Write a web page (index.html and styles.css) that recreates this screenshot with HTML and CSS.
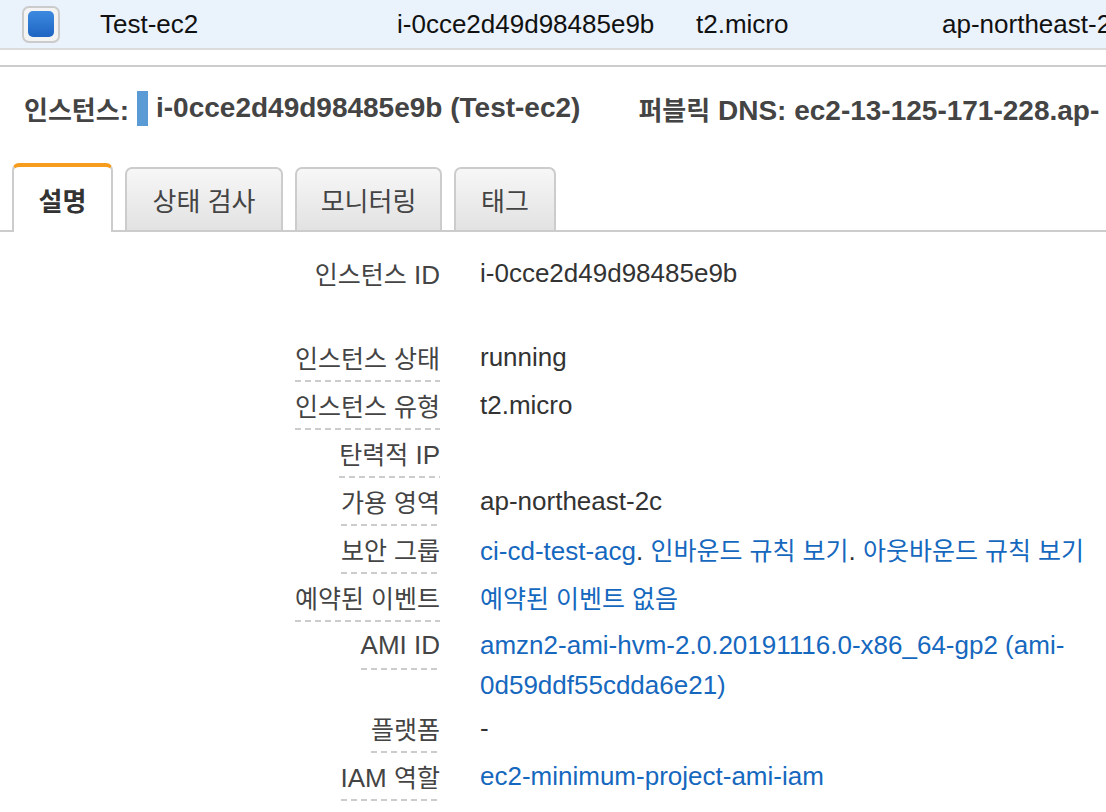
FILE: index.html
```html
<!DOCTYPE html>
<html lang="ko">
<head>
    <meta charset="UTF-8">
    <meta name="viewport" content="width=device-width, initial-scale=1.0">
    <title>EC2 인스턴스 - 설명</title>
    <link rel="stylesheet" href="styles.css">
</head>
<body>
    <!-- 선택된 인스턴스 행 -->
    <div class="instance-row">
        <div class="cell cell-check"><span class="checkbox"><span class="checkbox-mark"></span></span></div>
        <div class="cell cell-name">Test-ec2</div>
        <div class="cell cell-id">i-0cce2d49d98485e9b</div>
        <div class="cell cell-type">t2.micro</div>
        <div class="cell cell-zone">ap-northeast-2c</div>
    </div>

    <div class="detail-pane">
        <div class="detail-header">
            <span class="head-item"><span class="ko">인스턴스</span>:</span>
            <span class="id-bar"></span>
            <span class="head-item">i-0cce2d49d98485e9b (Test-ec2)</span>
            <span class="head-item head-dns"><span class="ko">퍼블릭</span> DNS: ec2-13-125-171-228.ap-</span>
        </div>

        <div class="tabs">
            <div class="tab tab-active" style="width: 101px"><span class="ko">설명</span></div>
            <div class="tab" style="width: 158px"><span class="ko">상태 검사</span></div>
            <div class="tab" style="width: 147px"><span class="ko">모니터링</span></div>
            <div class="tab" style="width: 102px"><span class="ko">태그</span></div>
        </div>

        <div class="details" id="details"></div>
    </div>

    <script>
        // 설명 탭에 표시할 항목
        const rows = [
            { key: '<span class="ko">인스턴스</span> ID', value: 'i-0cce2d49d98485e9b', plain: true },
            { key: '<span class="ko">인스턴스 상태</span>', value: 'running' },
            { key: '<span class="ko">인스턴스 유형</span>', value: 't2.micro' },
            { key: '<span class="ko">탄력적</span> IP', value: '' },
            { key: '<span class="ko">가용 영역</span>', value: 'ap-northeast-2c' },
            { key: '<span class="ko">보안 그룹</span>', value: '<a href="#">ci-cd-test-acg</a>. <a href="#" class="ko">인바운드 규칙 보기</a>. <a href="#" class="ko">아웃바운드 규칙 보기</a>' },
            { key: '<span class="ko">예약된 이벤트</span>', value: '<a href="#" class="ko">예약된 이벤트 없음</a>' },
            { key: 'AMI ID', value: '<a href="#">amzn2-ami-hvm-2.0.20191116.0-x86_64-gp2 (ami-<wbr>0d59ddf55cdda6e21)</a>' },
            { key: '<span class="ko">플랫폼</span>', value: '-' },
            { key: 'IAM <span class="ko">역할</span>', value: '<a href="#">ec2-minimum-project-ami-iam</a>' }
        ];

        const details = document.getElementById('details');
        rows.forEach(row => {
            const item = document.createElement('div');
            item.classList.add('detail-row');
            if (row.plain) item.classList.add('detail-row-first');
            item.innerHTML = `
                <div class="detail-key"><span class="key-text">${row.key}</span></div>
                <div class="detail-value">${row.value}</div>
            `;
            details.appendChild(item);
        });
    </script>
</body>
</html>
```

FILE: styles.css
```css
body {
    font-family: "Liberation Sans", "Noto Sans CJK KR", sans-serif;
    font-size: 26px;
    margin: 0;
    padding: 0;
    background-color: white;
    color: #333;
    overflow: hidden;
    width: 1106px;
    height: 812px;
}

.ko {
    font-family: "Noto Sans CJK KR", sans-serif;
    font-size: 25px;
}

a {
    color: #1668be;
    text-decoration: none;
}

.instance-row {
    display: flex;
    align-items: center;
    height: 48px;
    background-color: #eaf2fc;
    border-bottom: 2px solid #dcdcdc;
    color: #111;
    white-space: nowrap;
}

.cell {
    flex: none;
}

.cell-check {
    width: 78px;
    padding-left: 22px;
    display: flex;
}

.cell-name { width: 297px; }
.cell-id { width: 299px; }
.cell-type { width: 246px; }
.cell-zone { flex: 1; overflow: hidden; }

.checkbox {
    display: flex;
    align-items: center;
    justify-content: center;
    width: 34px;
    height: 33px;
    border: 2px solid #cbcbcb;
    border-radius: 7px;
    background-color: #f3f3f3;
}

.checkbox-mark {
    width: 26px;
    height: 26px;
    border-radius: 5px;
    background: linear-gradient(#3d8ae0, #1e64c2);
}

.detail-pane {
    margin-top: 15px;
    border-top: 2px solid #cccccc;
}

.detail-header {
    display: flex;
    align-items: center;
    height: 82px;
    padding-left: 24px;
    font-size: 28px;
    font-weight: bold;
    color: #444;
    white-space: nowrap;
}

.head-item {
    flex: none;
}

.detail-header .ko {
    font-size: 26px;
}

.id-bar {
    flex: none;
    width: 11px;
    height: 35px;
    margin: 0 8px 0 8px;
    background-color: #5b9bd5;
}

.head-dns {
    margin-left: 58px;
}

.tabs {
    display: flex;
    align-items: flex-end;
    gap: 12px;
    padding: 14px 0 0 12px;
    border-bottom: 2px solid #cccccc;
}

.tab {
    display: flex;
    align-items: center;
    justify-content: center;
    box-sizing: border-box;
    height: 63px;
    border: 2px solid #cccccc;
    border-bottom: none;
    border-radius: 7px 7px 0 0;
    background: linear-gradient(#f7f7f7, #e2e2e2);
    color: #444;
}

.tab .ko {
    font-size: 26px;
}

.tab-active {
    height: 69px;
    margin-bottom: -2px;
    border-top: 4px solid #f89c1e;
    background: white;
    color: #333;
    font-weight: bold;
}

.details {
    padding-top: 18px;
}

.detail-row {
    display: grid;
    grid-template-columns: 440px 1fr;
    column-gap: 40px;
}

.detail-row-first {
    margin-bottom: 36px;
}

.detail-key {
    display: flex;
    justify-content: flex-end;
    align-items: flex-start;
    color: #444;
}

.key-text {
    height: 46px;
    line-height: 46px;
    padding-bottom: 2px;
    white-space: nowrap;
    background: repeating-linear-gradient(to right, #cccccc 0 6px, transparent 6px 10px) left bottom / 100% 2px no-repeat;
}

.detail-row-first .key-text {
    background: none;
}

.detail-value {
    padding: 3px 16px 0 0;
    line-height: 40px;
    color: #333;
}
```
